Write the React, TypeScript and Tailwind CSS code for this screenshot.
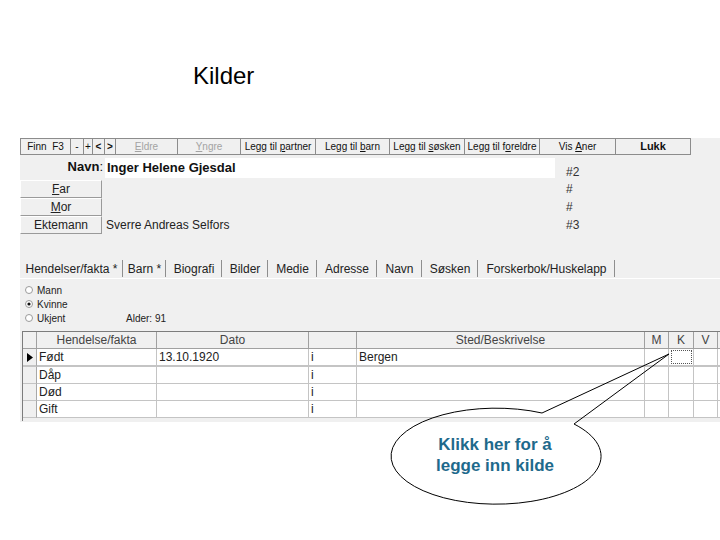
import React from "react";

const U = ({ c }: { c: string }) => <span className="underline underline-offset-1">{c}</span>;

function ToolBtn({ w, children, first, gray, bold }: { w: number; children: React.ReactNode; first?: boolean; gray?: boolean; bold?: boolean }) {
  return (
    <div
      style={{ width: w }}
      className={
        "h-[17px] flex items-center justify-center border-t border-b border-r border-[#8c8c8c] text-[10px] leading-none whitespace-pre " +
        (first ? "border-l " : "") +
        (gray ? "text-[#a3a3a3] " : "text-[#111] ") +
        (bold ? "font-bold text-[11px] " : "")
      }
    >
      {children}
    </div>
  );
}

function SideBtn({ children }: { children: React.ReactNode }) {
  return (
    <div className="w-[82px] h-[18px] flex items-center justify-center border-t border-l border-t-white border-l-white border-b border-r border-b-[#9a9a9a] border-r-[#9a9a9a] text-[12px] text-[#222]">
      {children}
    </div>
  );
}

function Radio({ on }: { on?: boolean }) {
  return (
    <svg width="8" height="8" viewBox="0 0 8 8" className="shrink-0">
      <circle cx="4" cy="4" r="3.5" fill="#fff" stroke="#9a9a9a" strokeWidth="1" />
      {on && <circle cx="4" cy="4" r="1.6" fill="#111" />}
    </svg>
  );
}

const tabs: [string, number][] = [
  ["Hendelser/fakta *", 103],
  ["Barn *", 43],
  ["Biografi", 56],
  ["Bilder", 46],
  ["Medie", 49],
  ["Adresse", 60],
  ["Navn", 45],
  ["Søsken", 56],
  ["Forskerbok/Huskelapp", 137],
];

const cols = [14, 120, 152, 48, 288, 24, 25, 24, 3];

function Row({ cells, first }: { cells: React.ReactNode[]; first?: boolean }) {
  return (
    <div className={"flex " + (first ? "h-[18px]" : "h-[17px]")}>
      {cols.map((w, i) => (
        <div
          key={i}
          style={{ width: w }}
          className={
            "shrink-0 flex items-center text-[12px] text-[#222] border-r border-[#c4c4c4] " +
            (first ? "border-b-2 " : "border-b ") +
            (i === 0 ? "bg-[#f0f0f0] border-r-[#a8a8a8] justify-center " : "bg-white pl-[2px] ") +
            (i === 6 && first ? "p-px " : "")
          }
        >
          {cells[i]}
        </div>
      ))}
    </div>
  );
}

export default function App() {
  const hdr = ["", "Hendelse/fakta", "Dato", "", "Sted/Beskrivelse", "M", "K", "V", ""];
  return (
    <div className="w-[720px] h-[540px] bg-white relative overflow-hidden font-['Liberation_Sans',Arial,sans-serif]">
      <div className="h-[138px] pl-[193px] pt-[62px] text-[24px] leading-[28px] text-black">Kilder</div>

      <div className="ml-[20px] w-[700px] h-[284px] bg-[#f0f0f0] flex flex-col">
        {/* toolbar */}
        <div className="flex">
          <ToolBtn w={51} first>Finn  F3</ToolBtn>
          <ToolBtn w={13}>-</ToolBtn>
          <ToolBtn w={9}>+</ToolBtn>
          <ToolBtn w={12}><span className="font-bold">&lt;</span></ToolBtn>
          <ToolBtn w={11}><span className="font-bold">&gt;</span></ToolBtn>
          <ToolBtn w={62} gray><U c="E" />ldre</ToolBtn>
          <ToolBtn w={63} gray><U c="Y" />ngre</ToolBtn>
          <ToolBtn w={75}>Legg til <U c="p" />artner</ToolBtn>
          <ToolBtn w={74}>Legg til <U c="b" />arn</ToolBtn>
          <ToolBtn w={75}>Legg til <U c="s" />øsken</ToolBtn>
          <ToolBtn w={75}>Legg til f<U c="o" />reldre</ToolBtn>
          <ToolBtn w={76}>Vis <U c="A" />ner</ToolBtn>
          <ToolBtn w={75} bold>Lukk</ToolBtn>
        </div>

        {/* Navn row */}
        <div className="flex h-[24px]">
          <div className="w-[85px] flex items-center justify-end pr-[2px] text-[13px] text-[#111]">
            <span className="font-bold">Navn</span>:
          </div>
          <div className="mt-[3px] w-[450px] h-[20px] bg-white flex items-center pl-[2px] text-[13px] font-bold text-[#111]">
            Inger Helene Gjesdal
          </div>
          <div className="pl-[11px] pt-[8px] text-[12px] text-[#333]">#2</div>
        </div>

        {/* Far / Mor / Ektemann */}
        <div className="mt-px flex flex-col">
          {[
            [<><U c="F" />ar</>, "", "#"],
            [<><U c="M" />or</>, "", "#"],
            ["Ektemann", "Sverre Andreas Selfors", "#3"],
          ].map((r, i) => (
            <div key={i} className="flex h-[18px] items-center">
              <SideBtn>{r[0]}</SideBtn>
              <div className="w-[464px] pl-[4px] text-[12px] text-[#222]">{r[1]}</div>
              <div className="text-[12px] text-[#333]">{r[2]}</div>
            </div>
          ))}
        </div>

        {/* tabs */}
        <div className="mt-[25px] flex h-[20px] border-b border-white">
          {tabs.map(([t, w], i) => (
            <div key={i} style={{ width: w }} className="flex items-center justify-center border-r border-[#8e8e8e] text-[12px] text-[#222] my-[1px] pl-[1px] pt-px">
              {t}
            </div>
          ))}
        </div>

        {/* radios */}
        <div className="mt-[4px] flex flex-col pl-[5px] text-[10px] text-[#222]">
          <div className="h-[14px] flex items-center gap-[4px]"><Radio />Mann</div>
          <div className="h-[14px] flex items-center gap-[4px]"><Radio on />Kvinne</div>
          <div className="h-[14px] flex items-center gap-[4px]">
            <Radio />
            <span className="w-[85px]">Ukjent</span>
            <span>Alder: 91</span>
          </div>
        </div>

        {/* table */}
        <div className="mt-[6px] ml-[2px] h-[90px] border-l border-t border-[#7c7c7c] flex flex-col">
          <div className="flex h-[17px]">
            {cols.map((w, i) => (
              <div
                key={i}
                style={{ width: w }}
                className="shrink-0 flex items-center justify-center border-r border-b border-[#a0a0a0] text-[12px] text-[#444] bg-[#f0f0f0]"
              >
                {hdr[i]}
              </div>
            ))}
          </div>
          <Row
            first
            cells={[
              <svg width="6" height="9" viewBox="0 0 6 9"><path d="M0 0 L6 4.5 L0 9 Z" fill="#000" /></svg>,
              "Født",
              "13.10.1920",
              "i",
              "Bergen",
              "",
              <div className="w-full h-full border border-dotted border-[#555]" />,
              "",
              "",
            ]}
          />
          <Row cells={["", "Dåp", "", "i", "", "", "", "", ""]} />
          <Row cells={["", "Død", "", "i", "", "", "", "", ""]} />
          <Row cells={["", "Gift", "", "i", "", "", "", "", ""]} />
        </div>
      </div>

      {/* callout */}
      <svg className="absolute left-0 top-0 pointer-events-none" width="720" height="540" viewBox="0 0 720 540">
        <path
          d="M542 413 L669 354 L574 424 A105 48 0 1 1 542 413"
          fill="none"
          stroke="#000"
          strokeWidth="1"
        />
      </svg>
      <div className="absolute left-[390px] top-[434px] w-[210px] text-center text-[17px] leading-[21px] font-bold text-[#1e6a8c]">
        Klikk her for å
        <br />
        legge inn kilde
      </div>
    </div>
  );
}
